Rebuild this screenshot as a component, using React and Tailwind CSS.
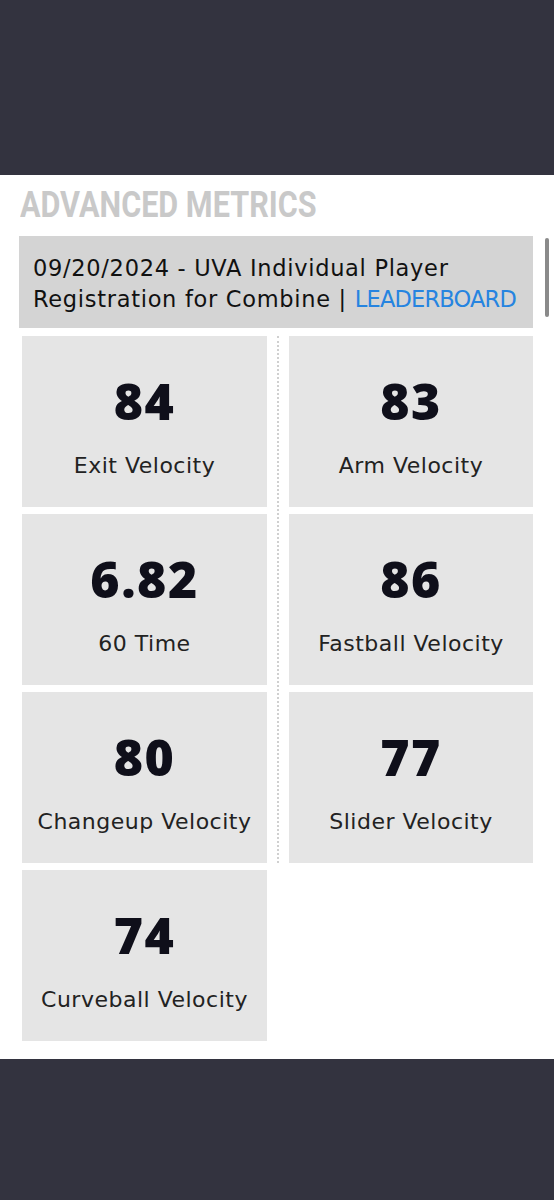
import React from 'react';

const METRICS = [
  { value: '84', label: 'Exit Velocity' },
  { value: '83', label: 'Arm Velocity' },
  { value: '6.82', label: '60 Time' },
  { value: '86', label: 'Fastball Velocity' },
  { value: '80', label: 'Changeup Velocity' },
  { value: '77', label: 'Slider Velocity' },
  { value: '74', label: 'Curveball Velocity' },
];

function MetricCard({ value, label }) {
  return (
    <div className="h-[171px] bg-[#e5e5e5] flex flex-col items-center">
      <div className="mt-[40px] text-[50px] leading-[50px] tracking-[1.5px] font-extrabold text-[#0f0f1a] font-['Open_Sans',sans-serif]">
        {value}
      </div>
      <div className="mt-[26px] text-[22px] leading-[28px] tracking-[0.5px] text-[#222] font-['DejaVu_Sans',sans-serif] whitespace-nowrap">
        {label}
      </div>
    </div>
  );
}

export default function App() {
  const left = METRICS.filter((_, i) => i % 2 === 0);
  const right = METRICS.filter((_, i) => i % 2 === 1);
  return (
    <div className="w-[554px] h-[1200px] bg-[#33333f] flex flex-col">
      <div className="h-[175px]" />
      <div className="h-[884px] bg-white relative">
        {/* scrollbar */}
        <div className="absolute left-[545px] top-[63px] w-[4px] h-[79px] rounded-full bg-[#8a8a8a]" />

        <h2 className="pl-[20px] pt-[9px] text-[36px] leading-[42px] font-bold text-[#c9c9c9] font-['Roboto',sans-serif] whitespace-nowrap">
          <span className="inline-block scale-x-[0.85] origin-left">ADVANCED METRICS</span>
        </h2>

        <div className="ml-[19px] mt-[10px] w-[514px] h-[92px] bg-[#d4d4d4] pl-[14px] pt-[17px] text-[22.5px] leading-[31px] tracking-[0.7px] text-[#111] font-['DejaVu_Sans',sans-serif] whitespace-nowrap">
          09/20/2024 - UVA Individual Player
          <br />
          Registration for Combine | <span className="text-[#2684e0] tracking-[-0.8px]">LEADERBOARD</span>
        </div>

        <div className="ml-[22px] mt-[8px] grid grid-cols-[245px_22px_244px] gap-y-[7px]">
          {left.map((m, i) => (
            <React.Fragment key={m.label}>
              <div className="col-start-1" style={{ gridRow: i + 1 }}>
                <MetricCard {...m} />
              </div>
              {right[i] && (
                <div className="col-start-3" style={{ gridRow: i + 1 }}>
                  <MetricCard {...right[i]} />
                </div>
              )}
            </React.Fragment>
          ))}
          <div className="col-start-2 row-start-1 row-end-4 flex justify-center">
            <div className="border-l-2 border-dotted border-[#d0d0d0]" />
          </div>
        </div>
      </div>
      <div className="flex-1" />
    </div>
  );
}
